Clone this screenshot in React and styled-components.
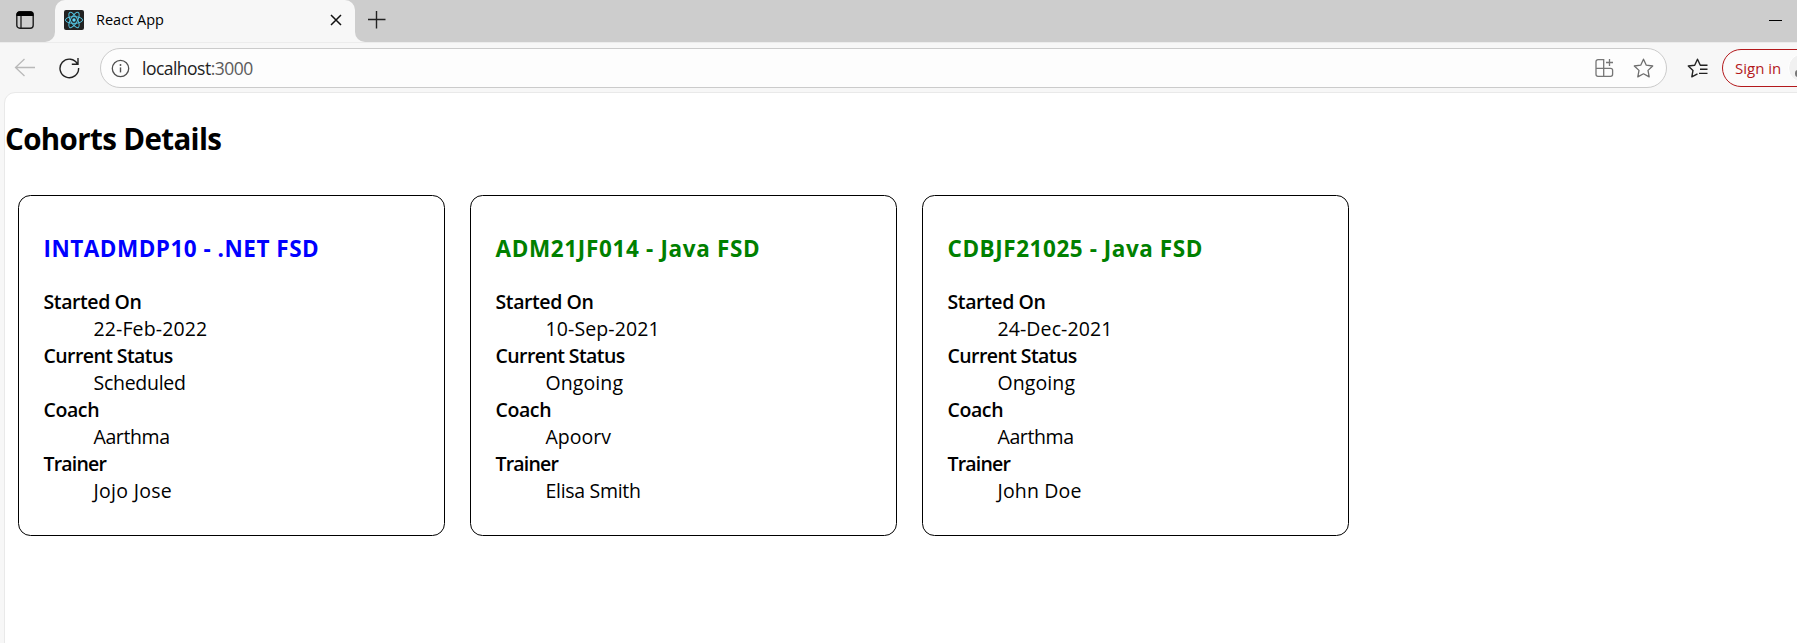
import React from 'react';
import styled, { createGlobalStyle } from 'styled-components';

const GlobalStyle = createGlobalStyle`
  * { box-sizing: border-box; }
  body { margin: 0; background: #f7f7f7; overflow: hidden; }
  svg { display: block; flex: none; }
`;

const Browser = styled.div`
  width: 100%;
  height: 643px;
  display: flex;
  flex-direction: column;
  overflow: hidden;
  background: #f7f7f7;
  color: #000;
  font-family: 'Open Sans', 'Noto Sans', sans-serif;
`;

const TabStrip = styled.header`
  height: 42px;
  flex: none;
  display: flex;
  background: #f7f7f7;
`;

const StripStart = styled.div`
  width: 55px;
  padding: 11px 0 0 16px;
  background: #cdcdcd;
  border-bottom-right-radius: 10px;
`;

const TabSlot = styled.div`
  width: 300px;
  background: linear-gradient(#cdcdcd 50%, #f7f7f7 50%);
`;

const Tab = styled.div`
  height: 42px;
  padding: 0 13px 2px 9px;
  display: flex;
  align-items: center;
  border-radius: 10px 10px 0 0;
  background: #f7f7f7;
`;

const TabTitle = styled.span`
  flex: 1;
  margin: 0 0 1px 12px;
  font-size: 14.5px;
  line-height: 20px;
  white-space: nowrap;
  letter-spacing: 0;
`;

const StripEnd = styled.div`
  flex: 1;
  display: flex;
  justify-content: space-between;
  padding: 10px 15px 0 12px;
  background: #cdcdcd;
  border-bottom-left-radius: 10px;
`;

const Toolbar = styled.nav`
  height: 50px;
  flex: none;
  display: flex;
  align-items: center;
  padding: 1px 0 0 14px;
  border-top: 1px solid #ececec;
`;

const Reload = styled.div`
  margin: 0 20px 1px 23px;
`;

const AddressBar = styled.div`
  width: 1567px;
  height: 40px;
  flex: none;
  display: flex;
  align-items: center;
  padding: 0 12px 0 10px;
  border: 1px solid #cbcbcb;
  border-radius: 20px;
  background: #fdfdfd;
`;

const Url = styled.span`
  flex: 1;
  margin: 0 0 1px 12px;
  font-size: 17.5px;
  line-height: 24px;
  letter-spacing: -0.52px;
  color: #222;
`;

const Port = styled.span`
  color: #5c5c5c;
`;

const AddressActions = styled.div`
  display: flex;
  gap: 19px;
`;

const Favorites = styled.div`
  margin: 0 14px 0 20px;
`;

const SignIn = styled.button`
  width: 120px;
  height: 38px;
  flex: none;
  display: flex;
  align-items: center;
  gap: 7px;
  margin: 0 0 1px;
  padding: 0 0 0 12px;
  border: 1px solid #b3191c;
  border-radius: 19px;
  background: #fbfbfb;
  color: #b3191c;
  font: 15px/20px 'Open Sans', 'Noto Sans', sans-serif;
  white-space: nowrap;
`;

const Page = styled.main`
  flex: 1;
  margin: 0 -12px -12px 4px;
  padding: 26px 0 0;
  border: 1px solid #e9e9e9;
  border-radius: 11px;
  background: #fff;
`;

const Heading = styled.h1`
  margin: 0;
  font-size: 29.5px;
  line-height: 40px;
  font-weight: 700;
  letter-spacing: -0.63px;
`;

const Cards = styled.div`
  display: flex;
  gap: 25px;
  padding: 36px 0 0 13px;
`;

const Card = styled.section`
  width: 427px;
  height: 341px;
  padding: 37px 24.5px 0;
  border: 1px solid #000;
  border-radius: 12.5px;
`;

const CardTitle = styled.h3`
  margin: 0 0 24px;
  font-size: 22.5px;
  line-height: 31px;
  font-weight: 700;
  white-space: nowrap;
  color: ${(p) => p.$color};
  letter-spacing: ${(p) => p.$spacing}px;
`;

const Details = styled.dl`
  margin: 0;
  font-size: 19.5px;
  line-height: 27px;
`;

const Term = styled.dt`
  font-weight: 600;
  letter-spacing: ${(p) => p.$spacing}px;
`;

const Value = styled.dd`
  margin: 0 0 0 50px;
  letter-spacing: ${(p) => p.$spacing}px;
`;

const terms = [
  { label: 'Started On', spacing: -0.4 },
  { label: 'Current Status', spacing: -0.58 },
  { label: 'Coach', spacing: -0.4 },
  { label: 'Trainer', spacing: -0.8 },
];

const cohorts = [
  { title: 'INTADMDP10 - .NET FSD', color: 'blue', spacing: 0.5, values: [['22-Feb-2022', 0.12], ['Scheduled', -0.27], ['Aarthma', -0.4], ['Jojo Jose', 0.3]] },
  { title: 'ADM21JF014 - Java FSD', color: 'green', spacing: 0.65, values: [['10-Sep-2021', 0.12], ['Ongoing', 0.1], ['Apoorv', 0], ['Elisa Smith', -0.3]] },
  { title: 'CDBJF21025 - Java FSD', color: 'green', spacing: 0.55, values: [['24-Dec-2021', 0.1], ['Ongoing', 0.1], ['Aarthma', -0.4], ['John Doe', 0.15]] },
];

const WorkspaceIcon = () => (
  <svg width="18" height="18" viewBox="0 0 18 18" fill="none">
    <rect x="0.8" y="0.8" width="16.4" height="16.4" rx="3" stroke="#1b1b1b" strokeWidth="1.4" />
    <path d="M0.5 5V3.5a3 3 0 0 1 3-3h11a3 3 0 0 1 3 3V5z" fill="#000" />
    <path d="M5 5v12" stroke="#1b1b1b" strokeWidth="1.3" />
  </svg>
);

const ReactLogo = () => (
  <svg width="20" height="20" viewBox="0 0 20 20" fill="none">
    <rect width="20" height="20" rx="2" fill="#222" />
    <g stroke="#53c1de" strokeWidth="1">
      <ellipse cx="10" cy="10" rx="8.6" ry="3.4" />
      <ellipse cx="10" cy="10" rx="8.6" ry="3.4" transform="rotate(60 10 10)" />
      <ellipse cx="10" cy="10" rx="8.6" ry="3.4" transform="rotate(120 10 10)" />
    </g>
    <circle cx="10" cy="10" r="1.7" fill="#61dafb" />
  </svg>
);

const CloseIcon = () => (
  <svg width="12" height="12" viewBox="0 0 12 12">
    <path d="M1 1l10 10M11 1L1 11" stroke="#111" strokeWidth="1.5" />
  </svg>
);

const PlusIcon = () => (
  <svg width="19" height="19" viewBox="0 0 19 19">
    <path d="M9.5 1v17.5M1 9.5h17.5" stroke="#222" strokeWidth="1.4" />
  </svg>
);

const MinimizeIcon = () => (
  <svg width="13" height="20" viewBox="0 0 13 20">
    <path d="M0 10.5h13" stroke="#000" />
  </svg>
);

const BackIcon = () => (
  <svg width="22" height="20" viewBox="0 0 22 20" fill="none">
    <path d="M21 9.5H1.5M10.5 1L1.5 9.5l9 8.5" stroke="#b9b9b9" strokeWidth="1.3" />
  </svg>
);

const ReloadIcon = () => (
  <svg width="21" height="22" viewBox="0 0 21 22" fill="none">
    <path d="M18.6 7.2A9.3 9.3 0 1 0 19.6 11M19 1v6.2h-6.2" stroke="#222" strokeWidth="1.4" />
  </svg>
);

const InfoIcon = () => (
  <svg width="19" height="19" viewBox="0 0 19 19" fill="none">
    <circle cx="9.5" cy="9.5" r="8.2" stroke="#505050" strokeWidth="1.3" />
    <path d="M9.5 8.4v5" stroke="#505050" strokeWidth="1.4" />
    <circle cx="9.5" cy="6" r="0.95" fill="#505050" />
  </svg>
);

const AppsIcon = () => (
  <svg width="20" height="20" viewBox="0 0 20 20" fill="none" stroke="#767676" strokeWidth="1.3">
    <path d="M9.7 10.3V1.7H4a2 2 0 0 0-2 2v12.6a2 2 0 0 0 2 2h12.6a2 2 0 0 0 2-2v-4a2 2 0 0 0-2-2H2M9.7 10v8.3M15.5 1v7M12 4.5h7" />
  </svg>
);

const StarIcon = () => (
  <svg width="21" height="21" viewBox="0 0 21 21" fill="none">
    <path d="M10.5 1.2l2.8 6 6.4.8-4.7 4.4 1.2 6.5-5.7-3.1-5.7 3.1L6 12.4 1.3 8l6.4-.8z" stroke="#6d6d6d" strokeWidth="1.3" strokeLinejoin="round" />
  </svg>
);

const FavoritesIcon = () => (
  <svg width="21" height="21" viewBox="0 0 21 21" fill="none" stroke="#222" strokeWidth="1.4" strokeLinejoin="round">
    <path d="M20.5 7.2h-7.2l-2.8-6-2.8 6-6.4.8L6 12.4l-1.2 6.5 5.7-3.1M13 11.3h7.5M12 15.4h8.5" />
  </svg>
);

const Avatar = () => (
  <svg width="30" height="30" viewBox="0 0 30 30">
    <circle cx="15" cy="15" r="14.5" fill="#f1f1f1" stroke="#fff" />
    <circle cx="14" cy="11" r="4.3" fill="#8a8a8a" />
    <rect x="7" y="17" width="15" height="7" rx="3" fill="#777" />
  </svg>
);

const CohortCard = ({ cohort }) => (
  <Card>
    <CardTitle $color={cohort.color} $spacing={cohort.spacing}>{cohort.title}</CardTitle>
    <Details>
      {terms.map((term, i) => (
        <React.Fragment key={term.label}>
          <Term $spacing={term.spacing}>{term.label}</Term>
          <Value $spacing={cohort.values[i][1]}>{cohort.values[i][0]}</Value>
        </React.Fragment>
      ))}
    </Details>
  </Card>
);

export default function App() {
  return (
    <Browser>
      <GlobalStyle />
      <TabStrip>
        <StripStart><WorkspaceIcon /></StripStart>
        <TabSlot>
          <Tab>
            <ReactLogo />
            <TabTitle>React App</TabTitle>
            <CloseIcon />
          </Tab>
        </TabSlot>
        <StripEnd>
          <PlusIcon />
          <MinimizeIcon />
        </StripEnd>
      </TabStrip>
      <Toolbar>
        <BackIcon />
        <Reload><ReloadIcon /></Reload>
        <AddressBar>
          <InfoIcon />
          <Url>localhost<Port>:3000</Port></Url>
          <AddressActions>
            <AppsIcon />
            <StarIcon />
          </AddressActions>
        </AddressBar>
        <Favorites><FavoritesIcon /></Favorites>
        <SignIn>Sign in<Avatar /></SignIn>
      </Toolbar>
      <Page>
        <Heading>Cohorts Details</Heading>
        <Cards>
          {cohorts.map((cohort) => <CohortCard key={cohort.title} cohort={cohort} />)}
        </Cards>
      </Page>
    </Browser>
  );
}
